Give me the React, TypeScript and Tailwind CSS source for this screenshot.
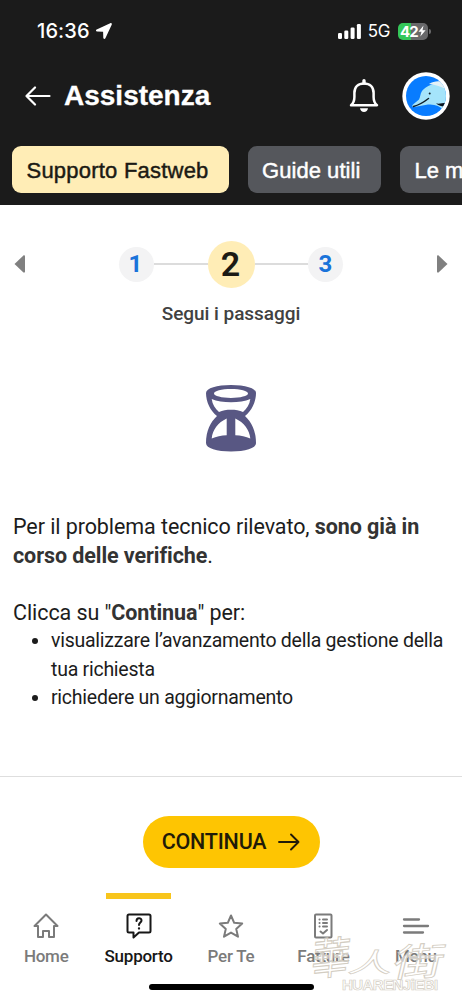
import type { ReactNode } from "react";

const tabs = [
  { title: "Supporto Fastweb", style: "w-[216.5px] tracking-[0.22px] bg-[#ffedb6] text-[#1b1a14]" },
  { title: "Guide utili", style: "w-[133.5px] tracking-[0.05px] bg-[#55575c] text-white" },
  { title: "Le mie richieste", style: "w-[200px] bg-[#55575c] text-white" },
];

function StatusBar() {
  return (
    <div className="flex h-[62px] items-center justify-between pl-[37px] pr-[31px] text-white">
      <div className="flex items-center gap-[6px]">
        <span className="font-['Inter'] text-[20px] font-medium leading-none tracking-[0.1px]">16:36</span>
        <svg width="16" height="16" viewBox="0 0 16 16" fill="currentColor">
          <path d="M14.2.2.7 6.500c-1.100.5-.9 2 .4 2l6 .2.2 6.100c0 1.300 1.600 1.600 2.100.4L15.700 1.700C16.100.6 15.300-.3 14.200.2Z" />
        </svg>
      </div>
      <div className="flex items-center">
        <svg width="23" height="15" viewBox="0 0 23 15" fill="currentColor">
          <rect x="0" y="9" width="4" height="6" rx="1.3" />
          <rect x="6.300" y="6.500" width="4" height="8.500" rx="1.300" />
          <rect x="12.600" y="3.500" width="4" height="11.500" rx="1.300" />
          <rect x="18.900" y="0" width="4" height="15" rx="1.300" />
        </svg>
        <span className="ml-[7px] font-['Inter'] text-[17px] leading-none tracking-[-0.4px]">5G</span>
        <div className="ml-[8px] flex h-[17px] w-[30px] items-center justify-center rounded-[5px] bg-[linear-gradient(90deg,#34c759_43%,#68686a_43%)]">
          <span className="font-['Inter'] text-[15px] font-bold leading-none tracking-[-0.8px]">42</span>
          <svg width="8" height="12" viewBox="0 0 8 12" fill="currentColor">
            <path d="M5.500.5.5 6.700h3L2.300 11.500 7.600 5.200H4.500Z" />
          </svg>
        </div>
        <span className="ml-px h-[5px] w-[2px] rounded-r-full bg-[#68686a]" />
      </div>
    </div>
  );
}

function Avatar() {
  return (
    <svg width="48" height="48" viewBox="0 0 48 48">
      <defs>
        <clipPath id="avatar">
          <circle cx="24" cy="24" r="20" />
        </clipPath>
      </defs>
      <circle cx="24" cy="24" r="23.700" fill="#fff" />
      <g clipPath="url(#avatar)">
        <rect width="48" height="48" fill="#087cff" />
        <path d="M48 11C38 9 25 12 20 19c-2 3-1.500 6-3 8.500L11 32.500c-1.500 1.500-.5 3 1.500 2.500L26 32.500c7-.5 12 1.500 16 6l6-2Z" fill="#a5e4fb" />
        <path d="M27 12c6-4 15-4 21 2v6c-5-4-12-7-21-8Z" fill="#e4f1f7" />
        <path d="M11.500 34.500C17 33 22 30 26.500 26.500" fill="none" stroke="#10202b" strokeWidth="1.500" strokeLinecap="round" />
        <circle cx="27.700" cy="21.500" r="1" fill="#10202b" />
        <path d="M34 31.500c4 .5 8-.5 13-1v4.500c-5 0-9-.5-13-3.500Z" fill="#091420" />
      </g>
    </svg>
  );
}

function Header() {
  return (
    <header className="h-[205px] bg-[#1b1b1b] font-['Liberation_Sans',sans-serif]">
      <StatusBar />
      <div className="flex h-[67px] items-center pl-[25px] pr-[12px] text-white">
        <svg width="26" height="20" viewBox="0 0 26 20" fill="none" stroke="currentColor" strokeWidth="2.200" strokeLinecap="round" strokeLinejoin="round">
          <path d="M24.500 10H1.500M10 1.500 1.500 10l8.500 8.500" />
        </svg>
        <h1 className="ml-[13px] text-[28px] font-bold leading-none [-webkit-text-stroke:0.3px_currentColor]">Assistenza</h1>
        <svg className="ml-auto mr-[23px]" width="30" height="34" viewBox="0 0 30 34" fill="none" stroke="currentColor" strokeWidth="2.500" strokeLinejoin="round">
          <path d="M2 26.300c2.500-2 3.400-4.300 3.400-8.300v-4C5.400 8 9.300 4.500 15 4.500s9.600 3.500 9.600 9.500v4c0 4 .9 6.300 3.400 8.300Z" />
          <path d="M15 4V1.700" strokeWidth="3.400" strokeLinecap="round" />
          <path d="M11 29.300h8c-.3 2.400-1.900 3.800-4 3.800s-3.700-1.400-4-3.800Z" fill="currentColor" stroke="none" />
        </svg>
        <Avatar />
      </div>
      <nav className="mt-[17px] flex gap-[19px] overflow-hidden pl-[12px]">
        {tabs.map((tab) => (
          <button
            key={tab.title}
            className={`h-[47px] shrink-0 whitespace-nowrap rounded-[9px] pl-[14.500px] pt-px text-left text-[22px] [-webkit-text-stroke:0.45px_currentColor] ${tab.style}`}
          >
            {tab.title}
          </button>
        ))}
      </nav>
    </header>
  );
}

function Stepper() {
  return (
    <section className="pt-[35px]">
      <div className="flex h-[48px] items-center justify-between px-[14px] font-bold">
        <svg width="12" height="18" viewBox="0 0 12 18" fill="#808080">
          <path d="M.5 9 9.200.7c.8-.7 1.800-.3 1.800.8v15c0 1.100-1 1.500-1.800.8Z" />
        </svg>
        <div className="flex items-center">
          <span className="flex size-[35px] items-center justify-center rounded-full bg-[#f3f3f4] pr-[2px] text-[24px] text-[#1a73da]">1</span>
          <span className="h-[2px] w-[53.5px] bg-[#dcdcdc]" />
          <span className="flex size-[47px] items-center justify-center rounded-full bg-[#ffedb6] pr-px text-[34px] font-semibold text-[#1b1a14]">2</span>
          <span className="h-[2px] w-[53.5px] bg-[#dcdcdc]" />
          <span className="flex size-[35px] items-center justify-center rounded-full bg-[#f3f3f4] text-[24px] text-[#1a73da]">3</span>
        </div>
        <svg width="12" height="18" viewBox="0 0 12 18" fill="#808080">
          <path d="M11.500 9 2.800.7C2 0 1 .4 1 1.500v15c0 1.100 1 1.500 1.800.8Z" />
        </svg>
      </div>
      <p className="mt-[12px] text-center text-[19px] font-medium leading-[28px] tracking-[-0.04px] text-[#414141]">Segui i passaggi</p>
    </section>
  );
}

function Hourglass() {
  return (
    <svg className="mx-auto mt-[57px] block" width="50" height="67" viewBox="0 0 50 67" fill="#585783">
      <path
        fillRule="evenodd"
        d="M0 8C0 17 4.500 26 11 31 4.500 37 0 46 0 58c0 5.500 11 8.500 25 8.500S50 63.500 50 58c0-12-4.500-21-11-27 6.500-5 11-14 11-23 0-5-11-8-25-8S0 3 0 8Z
          M8 8.500c0-2.400 7.600-4.400 17-4.400s17 2 17 4.400-7.600 4.400-17 4.400S8 10.900 8 8.500Z
          M5.700 14c5 2.200 12 3.200 19.300 3.200s14.300-1 19.300-3.200c-.8 5.500-3.300 9.700-7.300 13-3.500-1.700-7.500-2.300-12-2.300s-8.500.6-12 2.300c-4-3.300-6.500-7.500-7.300-13Z
          M20.700 33.500v16.800c-5.500.2-10.500 1.200-15 3.200C6.500 45 12 37.500 20.700 33.500Z
          M29.300 33.500v16.800c5.500.2 10.500 1.200 15 3.200C43.500 45 38 37.500 29.300 33.500Z"
      />
    </svg>
  );
}

function NavItem({ label, active, children }: { label: string; active?: boolean; children: ReactNode }) {
  return (
    <a className={`flex flex-1 flex-col items-center ${active ? "text-[#171717]" : "text-[#7b7b7b]"}`}>
      <span className={`h-[6px] w-[65px] ${active ? "bg-[#f8c51c]" : ""}`} />
      <svg className="mt-[13px]" width="28" height="28" viewBox="0 0 28 28" fill="none" stroke="currentColor" strokeWidth="2" strokeLinejoin="round" strokeLinecap="round">
        {children}
      </svg>
      <span className="mt-[4px] text-[17px] font-medium leading-[24px] tracking-[-0.25px]">{label}</span>
    </a>
  );
}

function BottomNav() {
  return (
    <nav className="mt-[25px] flex">
      <NavItem label="Home">
        <path d="M14 2.500 2.500 14H6v11h5v-6h6v6h5V14h3.500L14 2.500Z" />
      </NavItem>
      <NavItem label="Supporto" active>
        <path d="M4 2.500h20c1 0 1.500.5 1.500 1.500v15c0 1-.5 1.500-1.500 1.500H14L8.500 25.500v-5H4c-1 0-1.500-.5-1.500-1.500V4c0-1 .5-1.500 1.500-1.500Z" />
        <path d="M11.500 9c0-3.500 5-3.500 5-.5 0 2-2.500 2.200-2.500 4.500" />
        <path d="M14 16.300v.2" strokeWidth="2.300" />
      </NavItem>
      <NavItem label="Per Te">
        <path d="m14 3.500 3.200 7.300 8 .8-6 5.300 1.800 7.800-7-4.100-7 4.100 1.800-7.800-6-5.300 8-.8Z" />
      </NavItem>
      <NavItem label="Fatture">
        <rect x="6" y="2.500" width="16.500" height="23" rx="1" />
        <path d="M10.500 7.500h.1M10.500 11h.1M10.500 14.500h.1M14 7.500h4M14 11h4M14 14.500h4M11.500 19.500l2.500 2 4-3.500" />
      </NavItem>
      <NavItem label="Menu">
        <path d="M2 7.500h15M2 14h24M2 20.500h19" strokeWidth="2.300" />
      </NavItem>
    </nav>
  );
}

function Watermark() {
  return (
    <div className="pointer-events-none absolute left-[312px] top-[934px] w-[145px] text-white/60 [-webkit-text-stroke:1px_#d3cdc2]">
      <div className="flex h-[43px] items-center font-['Noto_Sans_CJK_TC',sans-serif] leading-none">
        <span className="-rotate-6 -skew-x-12 scale-y-110 text-[39px]">華</span>
        <span className="mt-[10px] scale-y-[0.6] -skew-x-12 text-[44px]">人</span>
        <span className="ml-[3px] mt-[6px] scale-x-[1.15] scale-y-[0.85] -rotate-3 -skew-x-12 text-[44px]">街</span>
      </div>
      <div className="ml-[30px] font-['Liberation_Sans',sans-serif] text-[15px] font-bold leading-none tracking-[-0.55px] [-webkit-text-stroke:0.700px_#d3cdc2]">HUARENJiEBI</div>
    </div>
  );
}

export default function App() {
  return (
    <div className="relative h-[1000px] w-[462px] overflow-hidden bg-white font-['Roboto',sans-serif] text-[#1c1c1c]">
      <Header />
      <Stepper />
      <Hourglass />

      <main className="mt-[61px] h-[263px] px-[13px] text-[21.500px] leading-[28.500px] tracking-[-0.08px]">
        <p>
          Per il problema tecnico rilevato, <strong className="text-[#333]">sono già in</strong>
          <br />
          <strong className="text-[#333]">corso delle verifiche</strong>.
        </p>
        <p className="mt-[28.500px]">
          Clicca su "<strong className="text-[#333]">Continua</strong>" per:
        </p>
        <ul className="list-disc pl-[38px] text-[19.500px] tracking-[-0.25px]">
          <li>
            visualizzare l’avanzamento della gestione della
            <br />
            tua richiesta
          </li>
          <li>richiedere un aggiornamento</li>
        </ul>
      </main>

      <div className="border-t border-[#dedede] pt-[39px]">
        <button className="mx-auto flex h-[52px] w-[177px] items-center justify-center gap-[12px] rounded-full bg-[#fec502] text-[21.500px] font-medium tracking-[-0.2px] text-[#211b08]">
          CONTINUA
          <svg width="22" height="18" viewBox="0 0 22 18" fill="none" stroke="currentColor" strokeWidth="1.900" strokeLinecap="round" strokeLinejoin="round">
            <path d="M1 9h19.500M13 1.500 20.500 9 13 16.500" />
          </svg>
        </button>
        <BottomNav />
      </div>

      <div className="mx-auto mt-[16px] h-[6px] w-[165px] rounded-full bg-black" />
      <Watermark />
    </div>
  );
}
